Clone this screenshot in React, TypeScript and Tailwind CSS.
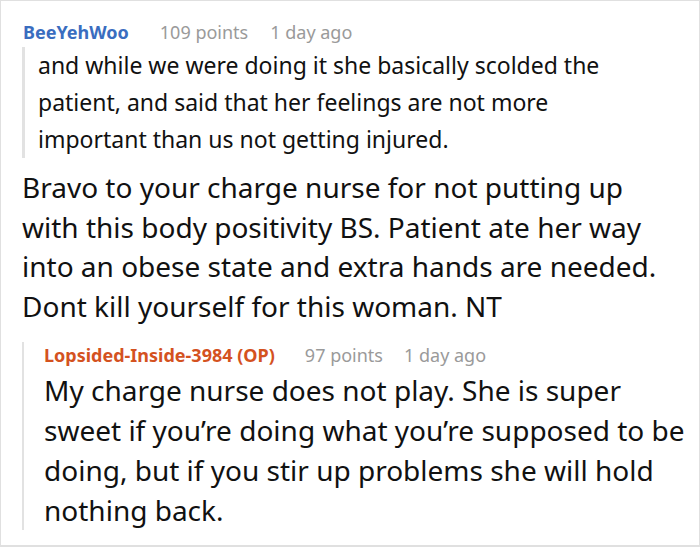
export default function App() {
  return (
    <div className="w-[700px] h-[547px] bg-white border border-[#e0e0e0] border-b-2 overflow-hidden font-['Noto_Sans',sans-serif]">
      <div className="pt-[18px] pl-[21px]">
        <div className="flex items-baseline text-[18px] leading-[26px] pl-[1px]">
          <span className="font-bold text-[#3a6dbf]">BeeYehWoo</span>
          <span className="ml-[31px] text-[#9a9a9a]">109 points</span>
          <span className="ml-[22px] text-[#9a9a9a]">1 day ago</span>
        </div>
        <div className="mt-[2px] border-l-[3px] border-[#e2e2e2] pl-[13px] text-[23px] leading-[37px] text-[#111]">
          and while we were doing it she basically scolded the<br />
          patient, and said that her feelings are not more<br />
          important than us not getting injured.
        </div>
      </div>
      <div className="pl-[21px] pt-[10px]">
        <div className="text-[28px] leading-[39.5px] text-[#111]">
          Bravo to your charge nurse for not putting up<br />
          with this body positivity BS. Patient ate her way<br />
          into an obese state and extra hands are needed.<br />
          Dont kill yourself for this woman. NT
        </div>
        <div className="mt-[16px] border-l-[2px] border-[#e2e2e2] pl-[20px]">
          <div className="flex items-baseline text-[18px] leading-[26px] mb-[2px]">
            <span className="font-bold text-[#d4521f]">Lopsided-Inside-3984 (OP)</span>
            <span className="ml-[30px] text-[#9a9a9a]">97 points</span>
            <span className="ml-[21px] text-[#9a9a9a]">1 day ago</span>
          </div>
          <div className="text-[28px] leading-[40px] text-[#111]">
            My charge nurse does not play. She is super<br />
            sweet if you’re doing what you’re supposed to be<br />
            doing, but if you stir up problems she will hold<br />
            nothing back.
          </div>
        </div>
      </div>
    </div>
  );
}
